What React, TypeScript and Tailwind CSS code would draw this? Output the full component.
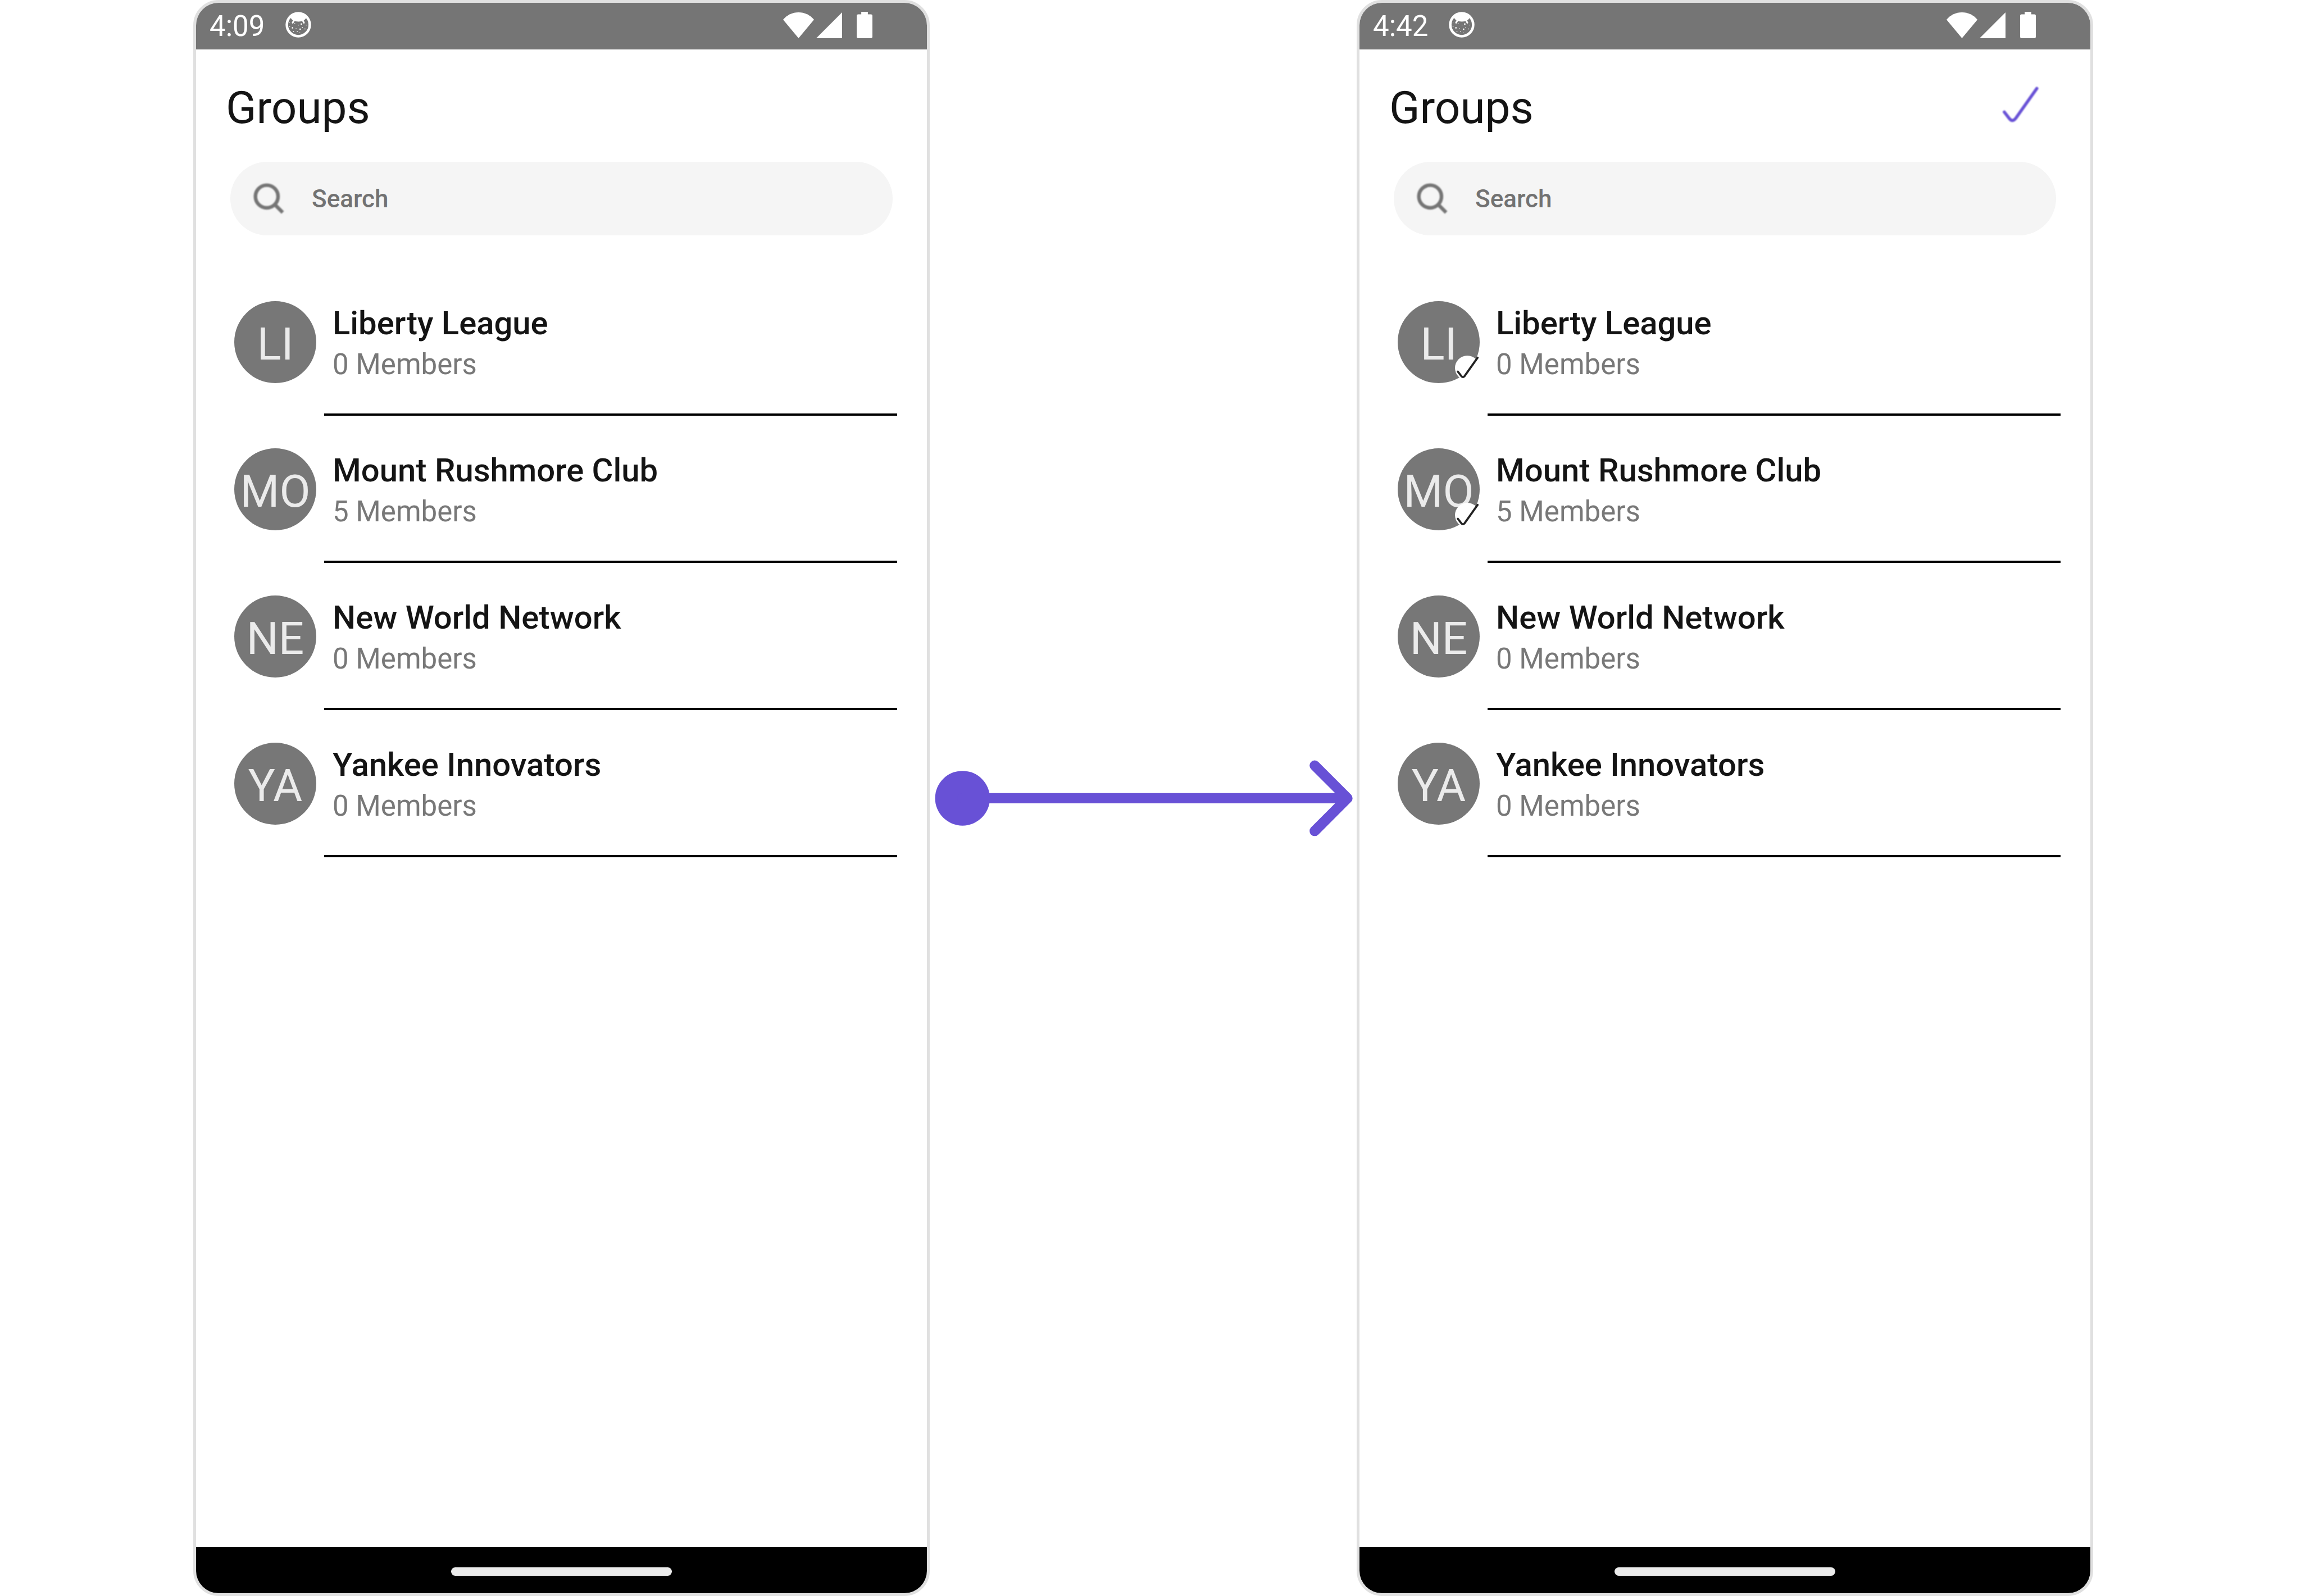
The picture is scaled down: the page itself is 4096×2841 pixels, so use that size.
import React from "react";

type Group = { initials: string; name: string; members: string; selected?: boolean };

const groups: Group[] = [
  { initials: "LI", name: "Liberty League", members: "0 Members" },
  { initials: "MO", name: "Mount Rushmore Club", members: "5 Members" },
  { initials: "NE", name: "New World Network", members: "0 Members" },
  { initials: "YA", name: "Yankee Innovators", members: "0 Members" },
];

const speckles: [number, number, number][] = [
  [588, 130, 4], [588, 153, 5], [605, 162, 8], [618, 138, 5], [641, 146, 4],
  [657, 140, 8], [686, 146, 4], [626, 168, 5], [650, 170, 8], [663, 160, 5],
  [678, 169, 5], [611, 184, 5], [633, 183, 5], [648, 191, 4],
];

function AppBadge() {
  return (
    <svg className="mb-[5px] size-[46px]" viewBox="563 68 152 152" fill="none" aria-hidden="true">
      <circle cx="639" cy="144" r="67.5" stroke="#fff" strokeWidth="15" />
      <path d="M584 102 L595 105 Q601 114 608 118 Q640 134 672 118 Q680 113 685 104 L694 102 L670 76 L608 76 Z" fill="#fff" />
      <path d="M614 118 L606 132 M665 118 L672 132" stroke="#fff" strokeWidth="10" strokeLinecap="round" />
      {speckles.map(([x, y, size]) => (
        <rect key={`${x}-${y}`} x={x - size / 2} y={y - size / 2} width={size} height={size} rx="1" fill="#fff" />
      ))}
    </svg>
  );
}

function StatusBar({ time }: { time: string }) {
  return (
    <div className="flex h-[83px] shrink-0 items-center bg-[#757575] pr-[97px] pl-6 text-white">
      <span className="mr-[37px] text-[51px] leading-[64px]">{time}</span>
      <AppBadge />
      <div className="mb-[5px] ml-auto flex items-end">
        <svg className="h-[46px] w-[55px]" viewBox="0 0 60 50" fill="#fff" aria-hidden="true">
          <path d="M30 50 L0 14 C8 5 18 0 30 0 C42 0 52 5 60 14 Z" />
        </svg>
        <svg className="ml-1 size-[46px]" viewBox="0 0 50 50" fill="#fff" aria-hidden="true">
          <path d="M50 0 V50 H0 Z" />
        </svg>
        <svg className="ml-[26px] h-[47px] w-[28px]" viewBox="0 0 31 52" fill="#fff" aria-hidden="true">
          <path d="M9 0 H22 V5 H28 Q31 5 31 8 V49 Q31 52 28 52 H3 Q0 52 0 49 V8 Q0 5 3 5 H9 Z" />
        </svg>
      </div>
    </div>
  );
}

function SelectedMark() {
  return (
    <span className="absolute right-0 bottom-[5px] size-[44px] rounded-full bg-white">
      <svg className="size-full overflow-visible" viewBox="0 0 48 48" fill="none" aria-hidden="true">
        <path d="M5.500 31 L12.500 40 Q15.500 43.500 18.500 40 L44 4" stroke="#222" strokeWidth="4" strokeLinecap="round" strokeLinejoin="round" />
      </svg>
    </span>
  );
}

function GroupRow({ group }: { group: Group }) {
  return (
    <li>
      <button
        type="button"
        aria-pressed={!!group.selected}
        className="flex h-[258px] w-full items-center gap-[29px] pt-1 pl-[68px] text-left"
      >
        <span className="relative flex size-[146px] shrink-0 items-center justify-center rounded-full bg-[#777777] pt-2 text-[80px] leading-none text-[#ebebeb]">
          {group.initials}
          {group.selected && <SelectedMark />}
        </span>
        <span className="flex flex-col">
          <span className="text-[58px] leading-[80px] font-medium text-[#141414]">{group.name}</span>
          <span className="text-[51px] leading-[68px] text-[#787878]">{group.members}</span>
        </span>
      </button>
      <div className="mr-[53px] ml-[228px] h-1 bg-black" />
    </li>
  );
}

function Phone({ id, time, items, confirm }: { id: string; time: string; items: Group[]; confirm?: boolean }) {
  return (
    <section className="flex min-w-0 flex-col overflow-hidden rounded-[45px] border-[5px] border-[#e0e0e0] bg-white">
      <StatusBar time={time} />
      <header className="flex items-start justify-between pt-14 pr-[87px] pl-[53px]">
        <h1 className="text-[80px] leading-[96px] text-[#141414]">Groups</h1>
        {confirm && (
          <button type="button" aria-label="Confirm selection" className="mt-[7px]">
            <svg className="size-[73px] blur-[1px]" viewBox="3910 165 80 80" fill="none" aria-hidden="true">
              <path d="M3917.500 218 L3927.500 231 Q3933.500 238.500 3940 230 L3981 172" stroke="#6851d6" strokeWidth="6" strokeLinecap="round" />
            </svg>
          </button>
        )}
      </header>
      <div className="mx-[61px] mt-12 flex h-[131px] items-center rounded-full bg-[#f5f5f5] pl-[41px]">
        <label htmlFor={id} aria-label="Search groups">
          <svg className="size-[55px] blur-[1px]" viewBox="0 0 60 60" fill="none" stroke="#757575" strokeWidth="7" aria-hidden="true">
            <circle cx="26" cy="26" r="22" />
            <path d="M41 41 L57 57" />
          </svg>
        </label>
        <input
          id={id}
          type="search"
          placeholder="Search"
          className="ml-[49px] min-w-0 flex-1 bg-transparent pt-px text-[44px] leading-[56px] font-medium text-[#727272] outline-none placeholder:text-[#727272]"
        />
      </div>
      <ul className="mt-[59px]">
        {items.map((group) => (
          <GroupRow key={group.name} group={group} />
        ))}
      </ul>
      <div className="mt-auto flex h-[82px] shrink-0 items-center justify-center bg-black pt-1">
        <div className="h-[15px] w-[393px] rounded-full bg-[#ebebeb]" />
      </div>
    </section>
  );
}

function FlowArrow() {
  return (
    <svg className="w-full self-center" viewBox="0 0 834 160" fill="none" stroke="#6851d6" strokeWidth="20" strokeLinecap="round" strokeLinejoin="round" aria-hidden="true">
      <circle cx="64" cy="80" r="53.500" fill="#6851d6" stroke="none" />
      <path d="M64 80 H816 M752 16 L816 80 L752 144" />
    </svg>
  );
}

export default function App() {
  const picked = groups.map((group, index) => ({ ...group, selected: index < 2 }));
  return (
    <main className="grid min-h-screen grid-cols-[1311fr_760fr_1311fr] bg-white pr-[370px] pl-[344px] font-['Roboto',sans-serif]">
      <Phone id="search-before" time="4:09" items={groups} />
      <FlowArrow />
      <Phone id="search-after" time="4:42" items={picked} confirm />
    </main>
  );
}
